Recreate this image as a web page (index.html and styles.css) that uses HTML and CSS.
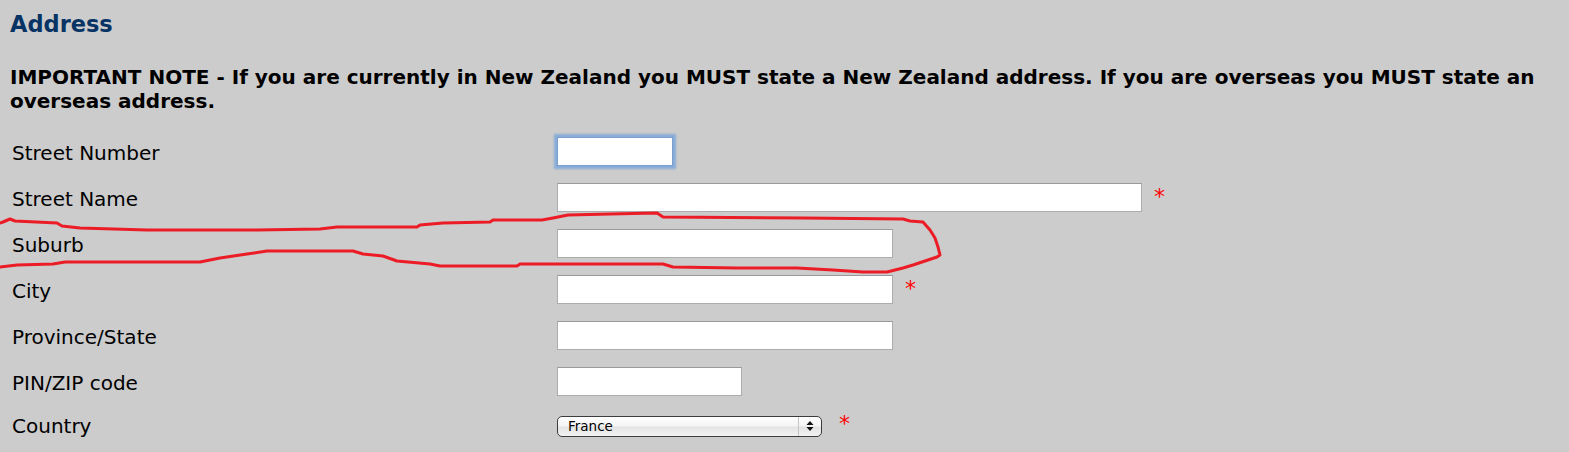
FILE: index.html
```html
<!DOCTYPE html>
<html lang="en">
<head>
    <meta charset="UTF-8">
    <meta name="viewport" content="width=device-width, initial-scale=1.0">
    <title>Address</title>
    <link rel="stylesheet" href="styles.css">
</head>
<body>
    <div class="container">
        <h1>Address</h1>
        <p class="note">IMPORTANT NOTE - If you are currently in New Zealand you MUST state a New Zealand address. If you are overseas you MUST state an overseas address.</p>
        <form class="address-form">
            <div class="row">
                <label class="label" for="streetNumber">Street Number</label>
                <input type="text" id="streetNumber" class="field field-number focused">
            </div>
            <div class="row">
                <label class="label" for="streetName">Street Name</label>
                <input type="text" id="streetName" class="field field-long">
                <span class="req">*</span>
            </div>
            <div class="row">
                <label class="label" for="suburb">Suburb</label>
                <input type="text" id="suburb" class="field field-medium">
            </div>
            <div class="row">
                <label class="label" for="city">City</label>
                <input type="text" id="city" class="field field-medium">
                <span class="req">*</span>
            </div>
            <div class="row">
                <label class="label" for="province">Province/State</label>
                <input type="text" id="province" class="field field-medium">
            </div>
            <div class="row">
                <label class="label" for="zip">PIN/ZIP code</label>
                <input type="text" id="zip" class="field field-short">
            </div>
            <div class="row row-country">
                <label class="label" for="country">Country</label>
                <div class="select-box">
                    <select id="country">
                        <option>France</option>
                        <option>New Zealand</option>
                    </select>
                    <span class="arrows">
                        <svg width="8" height="12" viewBox="0 0 8 12"><path d="M4 1 L7.5 5 L0.5 5 Z M0.5 7 L7.5 7 L4 11 Z" fill="#111"/></svg>
                    </span>
                </div>
                <span class="req req-select">*</span>
            </div>
        </form>
    </div>

    <!-- hand drawn mark around the suburb row -->
    <svg class="scribble" width="1569" height="452" viewBox="0 0 1569 452">
        <polyline fill="none" stroke="#ec1c26" stroke-width="3" stroke-linejoin="round" stroke-linecap="round"
            points="0,223 3,222 10,219 15,221 57,223 62,226 80,228 147,230 257,230 320,229 337,227 417,227 420,225 443,223 490,222 493,220 542,220 553,218 568,215 610,214 657,213 663,217 803,218 903,219 910,221 923,222 930,230 935,238 938,247 940,255 937,257 913,265 903,268 887,272 863,272 833,270 797,268 737,268 673,267 663,264 520,264 517,266 440,266 430,264 397,261 383,256 363,254 353,251 320,251 267,251 247,254 220,258 200,262 65,262 53,264 17,265 0,267"/>
    </svg>
</body>
</html>
```

FILE: styles.css
```css
body {
    margin: 0;
    padding: 0 10px;
    background-color: #cccccc;
    font-family: "DejaVu Sans", Verdana, sans-serif;
    color: #000;
}
h1 {
    margin: 11px 0 0;
    font-size: 22.5px;
    line-height: 26px;
    color: #073465;
}
.note {
    margin: 28px 0 0;
    font-size: 20px;
    line-height: 24px;
    font-weight: bold;
}
.address-form {
    margin-top: 15px;
}
.row {
    display: flex;
    align-items: center;
    height: 46px;
}
.row-country {
    height: 44px;
}
.label {
    width: 547px;
    padding: 4px 0 0 2px;
    font-size: 20px;
    line-height: 42px;
    box-sizing: border-box;
}
.row-country .label {
    padding-top: 0;
    line-height: 44px;
}
.field {
    box-sizing: border-box;
    height: 29px;
    margin: 0;
    border: 1px solid #acacac;
    border-top-color: #999;
    background-color: #fff;
    font-size: 15px;
}
.field-number {
    width: 116px;
}
.field-long {
    width: 585px;
}
.field-medium {
    width: 336px;
}
.field-short {
    width: 185px;
}
.focused {
    border-color: #7aa0cf;
    box-shadow: 0 0 2px 3px #88acd8;
    outline: none;
}
.req {
    margin: 0 0 0 12px;
    color: #ff0000;
    font-size: 22px;
    line-height: 20px;
}
.req-select {
    margin: 0 0 5px 17px;
}
.select-box {
    display: flex;
    box-sizing: border-box;
    width: 265px;
    height: 21px;
    border: 1px solid #3c3c3c;
    border-radius: 5px;
    background: linear-gradient(#ffffff, #f4f4f4 45%, #e4e4e4 55%, #f2f2f2);
    overflow: hidden;
}
.select-box select {
    flex: 1;
    appearance: none;
    -webkit-appearance: none;
    border: none;
    background: transparent;
    padding: 0 0 0 10px;
    font-family: "DejaVu Sans", sans-serif;
    font-size: 13.5px;
    color: #000;
}
.arrows {
    display: flex;
    align-items: center;
    justify-content: center;
    width: 22px;
    border-left: 1px solid #c4c4c4;
}
.scribble {
    position: absolute;
    top: 0;
    left: 0;
    pointer-events: none;
}
```
